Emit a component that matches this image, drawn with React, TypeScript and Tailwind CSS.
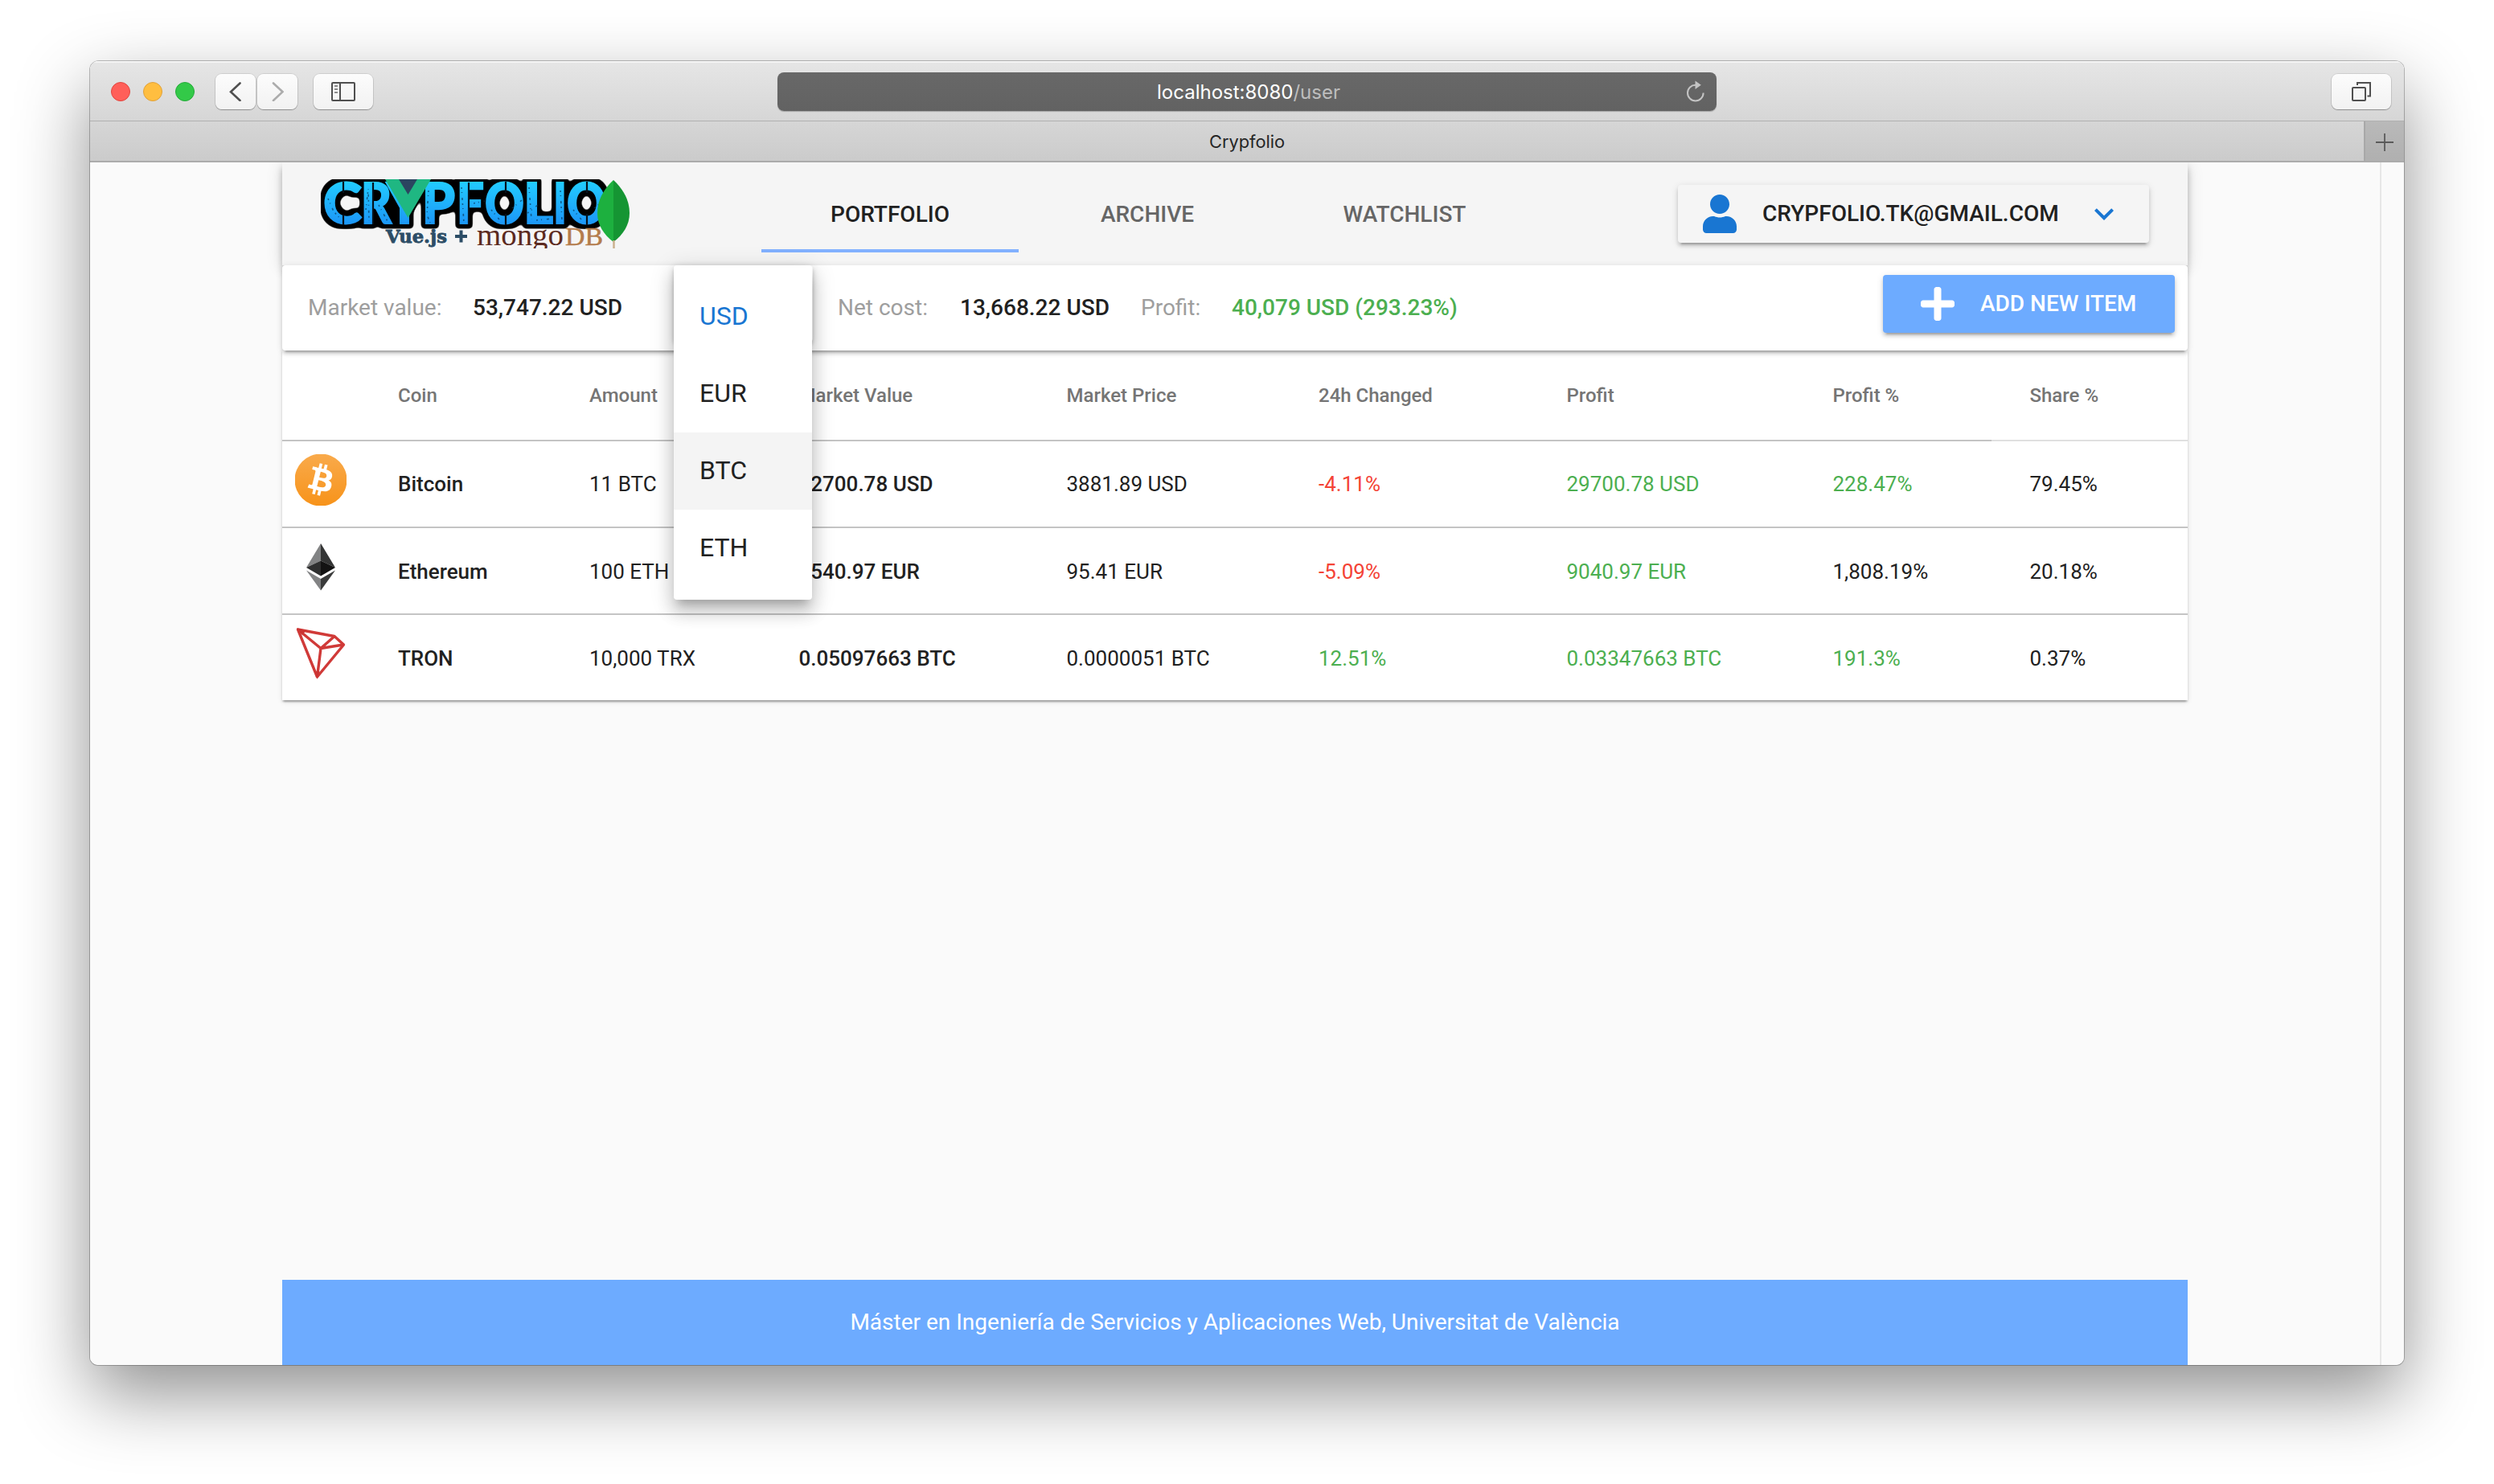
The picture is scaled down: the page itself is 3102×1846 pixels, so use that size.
import React from "react";
import { FaPlus, FaUser } from "react-icons/fa";
import { MdKeyboardArrowDown } from "react-icons/md";

const elevation2 =
  "shadow-[0_6px_2px_-4px_rgba(0,0,0,0.2),0_4px_4px_0_rgba(0,0,0,0.14),0_2px_10px_0_rgba(0,0,0,0.12)]";
const raised =
  "shadow-[0_1px_1px_0_rgba(0,0,0,0.28),0_0_0_1px_rgba(0,0,0,0.09)] bg-linear-to-b from-[#fcfcfc] to-[#f2f2f2]";

function Chrome() {
  return (
    <>
      <div className="flex h-[75px] shrink-0 items-start border-b border-[#b0b0b0] bg-linear-to-b from-[#e6e6e6] to-[#d6d6d6] pt-4 pl-[26px] shadow-[inset_0_2px_0_#f4f4f4]">
        <div className="flex h-11 items-center gap-4">
          <span className="size-6 rounded-full border border-[#e2453f] bg-[#ff5f59]" />
          <span className="size-6 rounded-full border border-[#e0a13a] bg-[#ffbe40]" />
          <span className="size-6 rounded-full border border-[#24ab38] bg-[#33c948]" />
        </div>
        <div className="ml-[26px] flex gap-0.5">
          <button className={`flex h-11 w-[50px] items-center justify-center rounded-[8px] ${raised}`}>
            <svg className="h-6 w-4" viewBox="0 0 16 24" fill="none" stroke="#505050" strokeWidth="2.6" strokeLinecap="round">
              <path d="M13.500 1.500 L2 12.200 L13.500 23" />
            </svg>
          </button>
          <button className={`flex h-11 w-[50px] items-center justify-center rounded-[8px] ${raised}`}>
            <svg className="h-6 w-4" viewBox="0 0 16 24" fill="none" stroke="#acacac" strokeWidth="2.6" strokeLinecap="round">
              <path d="M3 1.500 L14.500 12.200 L3 23" />
            </svg>
          </button>
        </div>
        <button className={`ml-5 flex h-11 w-[74px] items-center justify-center rounded-[8px] ${raised}`}>
          <svg className="h-6 w-[30px]" viewBox="0 0 30 24" fill="none" stroke="#505050" strokeWidth="2">
            <rect x="1" y="1" width="28" height="22" rx="1" />
            <path d="M11 1V23" />
            <path d="M4 5H8M4 9H8M4 13H8" stroke="#8a8a8a" />
          </svg>
        </button>
        <div className="-mt-0.5 ml-[503px] flex h-12 w-[1168px] items-center rounded-[8px] bg-linear-to-b from-[#686868] to-[#626262] font-[Inter] text-[24px] shadow-[0_1px_1px_rgba(0,0,0,0.25)]">
          <span className="ml-[472px] w-[228px] pt-0.5 whitespace-nowrap text-white">
            localhost:8080<span className="text-[#bdbdbd]">/user</span>
          </span>
          <svg className="ml-[430px] h-7 w-6" viewBox="0 0 24 28" fill="none" stroke="#c4c4c4" strokeWidth="2">
            <path d="M21.600 15.500 A9.800 9.800 0 1 1 12 5.800" />
            <path d="M11.500 0.500 L18.800 5.800 L11.500 11 Z" fill="#c4c4c4" stroke="none" />
          </svg>
        </div>
        <button className={`ml-[765px] flex h-11 w-[74px] items-center justify-center rounded-[8px] ${raised}`}>
          <svg className="h-6 w-[26px]" viewBox="0 0 26 24" fill="none" stroke="#505050" strokeWidth="2">
            <rect x="2" y="7" width="16" height="16" rx="1" />
            <path d="M8 4V1H24V17.500H20.500" />
          </svg>
        </button>
      </div>
      <div className="flex h-[51px] shrink-0 items-stretch border-b-2 border-[#ababab] bg-linear-to-b from-[#d6d6d6] to-[#cbcbcb]">
        <div className="flex flex-1 items-center pt-0.5 pl-[1392px] font-[Inter] text-[21.8px] text-[#262626]">Crypfolio</div>
        <div className="flex w-[50px] items-center justify-center border-l-2 border-[#a8a8a8] bg-linear-to-b from-[#b9b9b9] to-[#b0b0b0]">
          <svg className="mt-0.5 size-[22px]" viewBox="0 0 22 22" stroke="#5a5a5a" strokeWidth="1.8">
            <path d="M0 11H22M11 0V22" />
          </svg>
        </div>
      </div>
    </>
  );
}

const glyphs: [string, number, number][] = [
  ["C", 3, 48], ["R", 50, 38], ["Y", 82, 44], ["P", 126, 41], ["F", 169, 34],
  ["O", 204, 49], ["L", 252, 37], ["I", 289, 17], ["O", 306, 49],
];

function Logo() {
  return (
    <svg className="block h-[86px] w-[384px]" viewBox="0 0 384 86">
      <defs>
        <linearGradient id="ink" x1="0" y1="4" x2="0" y2="56" gradientUnits="userSpaceOnUse">
          <stop offset="0" stopColor="#22cbff" />
          <stop offset="1" stopColor="#1c96f7" />
        </linearGradient>
        <filter id="outline" x="-10" y="-10" width="400" height="100" filterUnits="userSpaceOnUse" colorInterpolationFilters="sRGB">
          <feMorphology in="SourceAlpha" operator="dilate" radius="5" result="fat" />
          <feGaussianBlur in="fat" stdDeviation="2.5" result="soft" />
          <feComponentTransfer in="soft" result="edge">
            <feFuncA type="linear" slope="5" intercept="-1.7" />
          </feComponentTransfer>
          <feMerge>
            <feMergeNode in="edge" />
            <feMergeNode in="SourceGraphic" />
          </feMerge>
        </filter>
      </defs>
      <g fontFamily="Lato" fontWeight="900" fontSize="70" fill="url(#ink)" stroke="url(#ink)" strokeWidth="2" filter="url(#outline)">
        {glyphs.map(([c, x, w], i) => (
          <text key={i} x={x} y="54.5" textLength={w} lengthAdjust="spacingAndGlyphs">{c}</text>
        ))}
      </g>
      <g stroke="#06121c" strokeWidth="2.2" fill="none">
        <path d="M28 3V17M28 44V57M65 4V56M230 3V17M230 43V57M331 3V17M331 43V57M184 4V56" />
      </g>
      <g stroke="#0a3b60" strokeWidth="1.6" strokeDasharray="2 4 1 6 3 4" fill="none" opacity="0.7">
        <path d="M9 24L16 40L26 51M56 38L59 12L60 52M72 32L84 54M134 14L132 44L136 54M175 10L178 54M190 30L204 27M212 38L222 50M238 36L250 26M259 10L262 50M257 42L270 32M268 51L288 49M298 14L300 52M314 38L324 50M340 36L352 26" />
      </g>
      <path d="M80 0H137L108.500 48Z" fill="#1fb782" />
      <path d="M97 0H120L108.500 19Z" fill="#2b4560" />
      <text x="81" y="79" fontFamily="DejaVu Serif" fontWeight="700" fontSize="23" fill="#2c4d66" stroke="#2c4d66" strokeWidth="0.8" textLength="76" lengthAdjust="spacingAndGlyphs">Vue.js</text>
      <path d="M167 71H182M174.500 63.500V78.500" stroke="#2c4d66" strokeWidth="4" />
      <text x="194" y="81.500" fontFamily="Liberation Serif" fontSize="37" fill="#5c2a20" textLength="108" lengthAdjust="spacingAndGlyphs">mongo</text>
      <text x="304" y="82" fontFamily="Liberation Serif" fontSize="32" fill="#b47c4c" stroke="#b47c4c" strokeWidth="0.5" textLength="47" lengthAdjust="spacingAndGlyphs">DB</text>
      <path d="M364 1C350 14 344 28 344 42C344 57 352 69 364 78Z" fill="#1db03f" />
      <path d="M364 1C378 14 384 28 384 42C384 57 376 69 364 78Z" fill="#159533" />
      <path d="M364.500 76V86" stroke="#cbb08e" strokeWidth="2.5" />
    </svg>
  );
}

function BitcoinIcon() {
  return (
    <svg className="size-16" viewBox="0 0 64 64">
      <defs>
        <linearGradient id="btc" x1="0" y1="0" x2="0" y2="1">
          <stop offset="0" stopColor="#f9aa4b" />
          <stop offset="1" stopColor="#f7931a" />
        </linearGradient>
      </defs>
      <circle cx="32" cy="32" r="32.500" fill="url(#btc)" />
      <path
        fill="#fff"
        d="M46.110 27.441c.636-4.258-2.606-6.547-7.039-8.074l1.438-5.768-3.512-.875-1.400 5.617c-.922-.23-1.871-.447-2.813-.662l1.410-5.653-3.509-.875-1.439 5.766c-.764-.174-1.514-.346-2.242-.527l.004-.018-4.842-1.209-.934 3.750s2.605.597 2.550.634c1.422.355 1.680 1.296 1.636 2.042l-1.638 6.571c.098.025.225.061.365.117l-.371-.092-2.297 9.205c-.174.432-.615 1.080-1.609.834.035.051-2.552-.637-2.552-.637l-1.743 4.020 4.569 1.139c.850.213 1.683.436 2.502.646l-1.453 5.835 3.507.875 1.440-5.772c.957.260 1.887.500 2.797.726l-1.434 5.745 3.511.875 1.453-5.823c5.987 1.133 10.490.676 12.383-4.738 1.527-4.360-.075-6.875-3.225-8.516 2.294-.531 4.022-2.040 4.483-5.157zM38.087 38.690c-1.086 4.360-8.426 2.004-10.807 1.412l1.928-7.729c2.380.594 10.011 1.770 8.880 6.317zm1.085-11.312c-.990 3.966-7.100 1.951-9.083 1.457l1.748-7.010c1.983.494 8.367 1.416 7.335 5.553z"
      />
    </svg>
  );
}

function EthereumIcon() {
  return (
    <svg className="size-16" viewBox="0 0 64 64">
      <path d="M32 3L14 33L32 24.500Z" fill="#828384" />
      <path d="M32 3L50 33L32 24.500Z" fill="#343535" />
      <path d="M14 33L32 24.500V43.500Z" fill="#2f3030" />
      <path d="M50 33L32 24.500V43.500Z" fill="#131313" />
      <path d="M14 36.500L32 47V61.500Z" fill="#828384" />
      <path d="M50 36.500L32 47V61.500Z" fill="#3a3b3b" />
    </svg>
  );
}

function TronIcon() {
  return (
    <svg className="size-16" viewBox="0 0 64 64" fill="none" stroke="#d03a38" strokeWidth="3.4" strokeLinejoin="round">
      <path d="M3.500 2L49 10.500L60.500 21L27.500 61Z" />
      <path d="M4 2.500L32 25.500L49 10.500M32 25.500L60 21M32 25.500L27.500 61" />
      <path d="M2 0L13 4L9 9Z M24.500 54L30.500 54L27.500 64Z" fill="#cb3433" stroke="none" />
    </svg>
  );
}

const columns = ["", "Coin", "Amount", "Market Value", "Market Price", "24h Changed", "Profit", "Profit %", "Share %"];
const green = "text-[#4caf50]";
const red = "text-[#f44336]";
const rows = [
  { icon: <BitcoinIcon />, coin: "Bitcoin", amount: "11 BTC", value: "42700.78 USD", price: "3881.89 USD", change: "-4.11%", changeColor: red, profit: "29700.78 USD", pct: "228.47%", pctColor: green, share: "79.45%" },
  { icon: <EthereumIcon />, coin: "Ethereum", amount: "100 ETH", value: "9540.97 EUR", price: "95.41 EUR", change: "-5.09%", changeColor: red, profit: "9040.97 EUR", pct: "1,808.19%", pctColor: "", share: "20.18%" },
  { icon: <TronIcon />, coin: "TRON", amount: "10,000 TRX", value: "0.05097663 BTC", price: "0.0000051 BTC", change: "12.51%", changeColor: green, profit: "0.03347663 BTC", pct: "191.3%", pctColor: green, share: "0.37%" },
];
const grid = "grid grid-cols-[144px_238px_260.5px_333px_313.5px_308.5px_331px_245px_196.5px] items-center whitespace-nowrap";

function Menu() {
  return (
    <ul className="absolute top-0 left-0 z-20 w-[172px] rounded-[4px] bg-white py-4 text-[32px] shadow-[0_10px_10px_-6px_rgba(0,0,0,0.2),0_16px_20px_2px_rgba(0,0,0,0.14),0_6px_28px_4px_rgba(0,0,0,0.12)]">
      <li className="flex h-24 items-center px-8 pb-[3px] text-[#1976d2]">USD</li>
      <li className="flex h-24 items-center px-8 pb-[3px]">EUR</li>
      <li className="flex h-24 items-center bg-[#f4f4f4] px-8 pb-[3px]">BTC</li>
      <li className="flex h-24 items-center px-8 pb-[3px]">ETH</li>
    </ul>
  );
}

export default function App() {
  return (
    <div className="h-[1846px] w-[3102px] overflow-hidden bg-white pt-[76px] pl-[112px] font-[Roboto,sans-serif] text-[#212121]">
      <div className="h-[1622px] w-[2878px] rounded-t-[11px] rounded-b-[10px] shadow-[0_0_0_1px_rgba(0,0,0,0.25),0_36px_90px_0_rgba(0,0,0,0.44)]">
        <div className="flex h-full flex-col overflow-hidden rounded-t-[11px] rounded-b-[10px] bg-[#fafafa]">
          <Chrome />
          <div className="flex min-h-0 flex-1 overflow-hidden pl-[239px]">
            <div className="flex w-[2370px] flex-col">
              <header className="flex h-32 shrink-0 bg-[#f5f5f5] shadow-[0_4px_8px_-2px_rgba(0,0,0,0.2),0_8px_10px_0_rgba(0,0,0,0.14),0_2px_20px_0_rgba(0,0,0,0.12)]">
                <div className="pt-[21px] pl-12"><Logo /></div>
                <nav className="ml-[164px] flex h-28 text-[28px] font-medium">
                  <a className="flex w-80 items-center justify-center border-b-4 border-[#82b1ff] pt-[24px] pb-[2px]">PORTFOLIO</a>
                  <a className="flex w-80 items-center justify-center pt-[22px] pb-1 text-[#666]">ARCHIVE</a>
                  <a className="flex w-80 items-center justify-center pt-[22px] pb-1 text-[#666]">WATCHLIST</a>
                </nav>
                <button className={`mt-7 ml-[180px] flex h-[72px] w-[586px] items-center rounded-[4px] bg-[#f5f5f5] pl-[31px] text-[28px] font-medium ${elevation2}`}>
                  <FaUser className="h-12 w-[42px] text-[#1976d2]" />
                  <span className="ml-8 w-[370px] text-left whitespace-nowrap">CRYPFOLIO.TK@GMAIL.COM</span>
                  <MdKeyboardArrowDown className="ml-[31px] size-12 text-[#1976d2]" />
                </button>
              </header>
              <section className={`relative z-10 flex h-[106px] shrink-0 items-center rounded-[4px] bg-white pl-8 text-[28px] whitespace-nowrap ${elevation2}`}>
                <span className="w-[205px] text-[#9e9e9e]">Market value:</span>
                <span className="w-[250px] font-medium">53,747.22 USD</span>
                <div className="relative h-full w-[173px]">
                  <div className={`h-[95px] w-full rounded-[4px] ${elevation2}`} />
                  <Menu />
                </div>
                <span className="ml-[31px] w-[152px] text-[#9e9e9e]">Net cost:</span>
                <span className="w-[225px] font-medium">13,668.22 USD</span>
                <span className="w-[113px] text-[#9e9e9e]">Profit:</span>
                <span className="font-medium text-[#4caf50]">40,079 USD (293.23%)</span>
                <button className={`mt-3 mr-4 ml-auto flex h-[72px] w-[363px] items-center self-start rounded-[4px] bg-[#6dabff] pl-[47px] font-medium text-white ${elevation2}`}>
                  <FaPlus className="h-12 w-[42px]" />
                  <span className="ml-8">ADD NEW ITEM</span>
                </button>
              </section>
              <section className="shrink-0 bg-white text-[26px] shadow-[0_4px_2px_-2px_rgba(0,0,0,0.2),0_2px_2px_0_rgba(0,0,0,0.14),0_2px_6px_0_rgba(0,0,0,0.12)]">
                <div className={`${grid} h-[111px] text-2xl font-medium text-[#757575]`}>
                  {columns.map((c, i) => <span key={i}>{c}</span>)}
                </div>
                <div className="h-0.5 bg-[#e0e0e0]"><div className="h-full w-[2126px] bg-[#c4c4c4]" /></div>
                {rows.map((r, i) => (
                  <div key={r.coin} className={`${grid} h-[106px] ${i > 0 ? "box-content border-t-2 border-[#c4c4c4] *:not-first:pt-0.5" : ""}`}>
                    <span className="-mt-2.5 pl-4">{r.icon}</span>
                    <span className="font-medium">{r.coin}</span>
                    <span>{r.amount}</span>
                    <span className="font-medium">{r.value}</span>
                    <span>{r.price}</span>
                    <span className={r.changeColor}>{r.change}</span>
                    <span className={green}>{r.profit}</span>
                    <span className={r.pctColor}>{r.pct}</span>
                    <span>{r.share}</span>
                  </div>
                ))}
              </section>
              <footer className="mt-auto flex h-[106px] shrink-0 items-center justify-center bg-[#6dabff] text-[28px] text-white">
                Máster en Ingeniería de Servicios y Aplicaciones Web, Universitat de València
              </footer>
            </div>
            <div className="ml-auto w-[30px] border-l-2 border-[#e7e7e7]" />
          </div>
        </div>
      </div>
    </div>
  );
}
